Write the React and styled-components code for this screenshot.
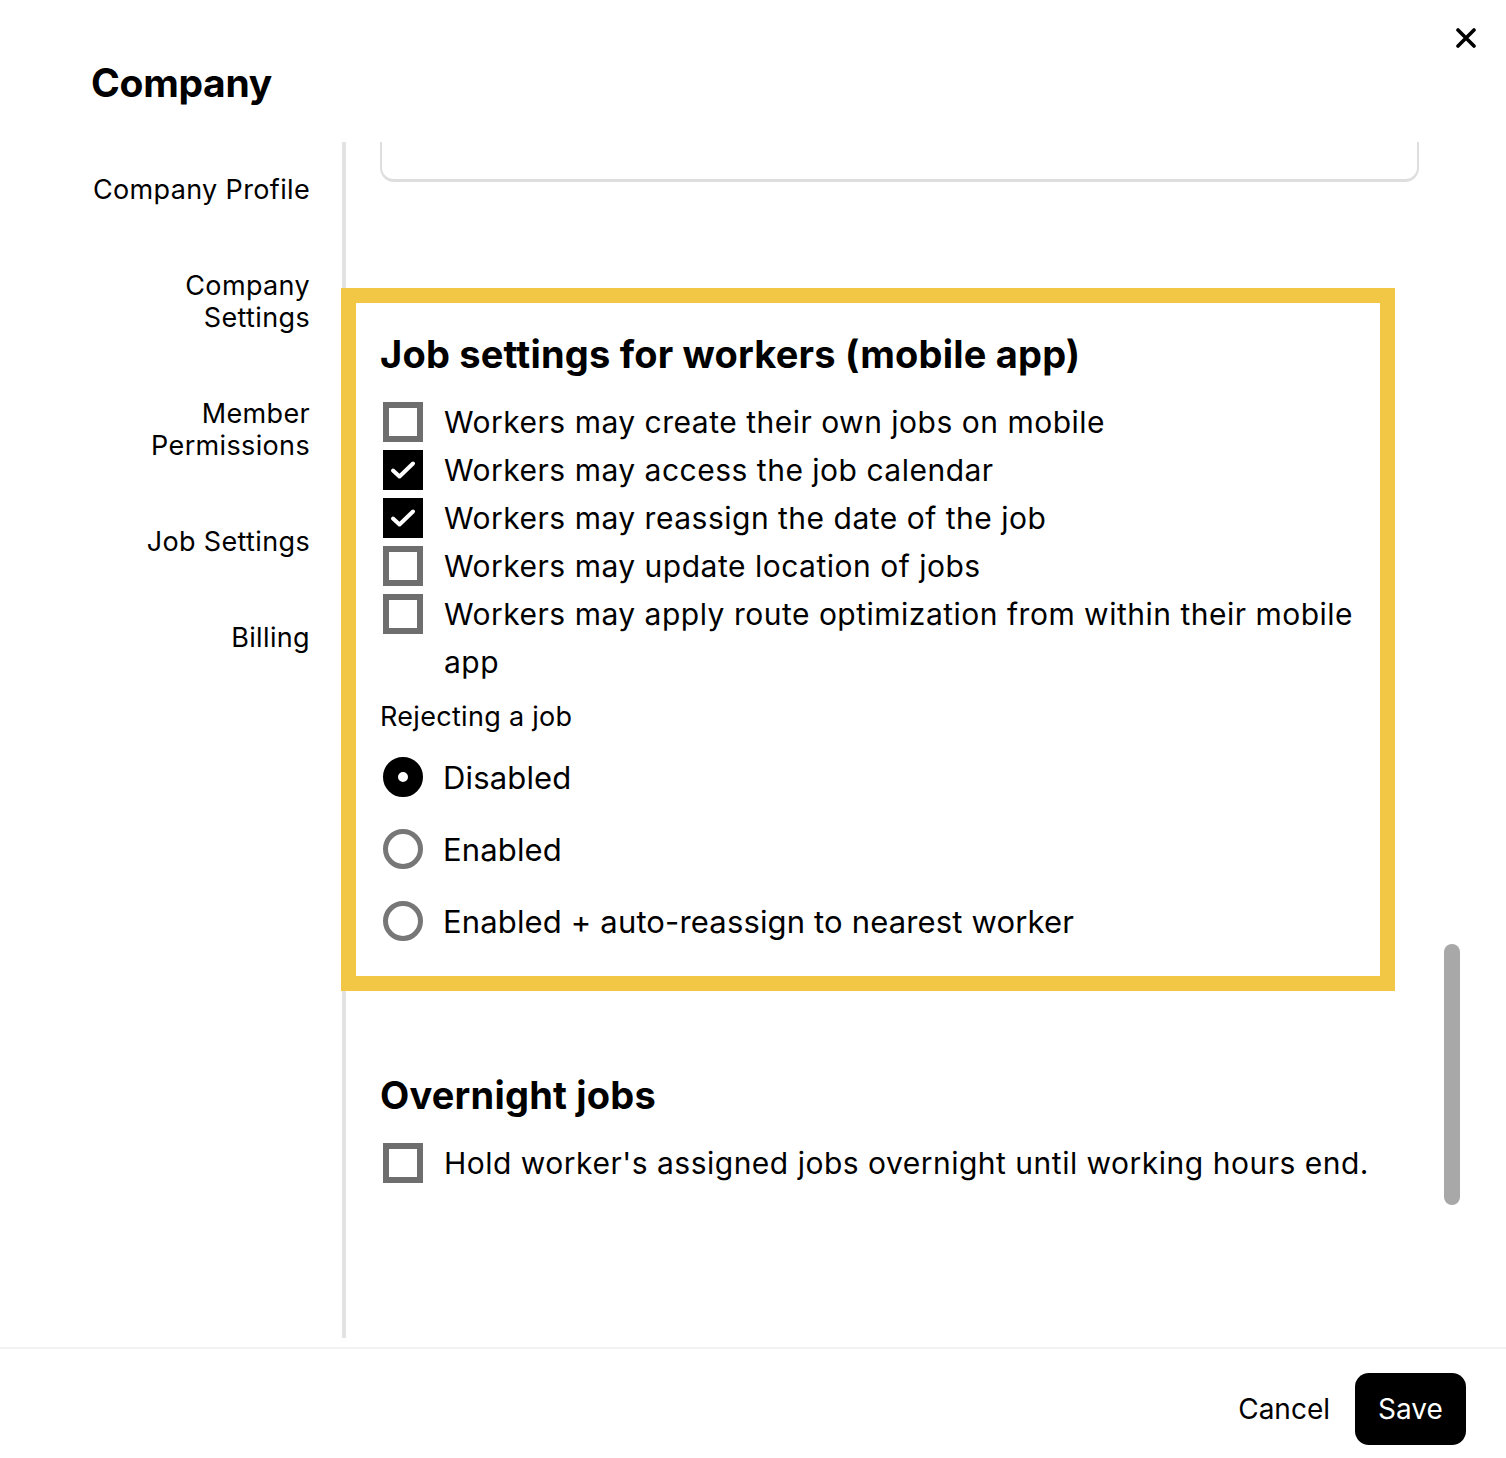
import React from 'react';
import styled, { createGlobalStyle } from 'styled-components';

const GlobalStyle = createGlobalStyle`
    html, body {
        margin: 0;
        padding: 0;
        background: #fff;
    }
    body {
        font-family: "Inter", "Noto Sans", "Liberation Sans", sans-serif;
        color: #000;
    }
    * { box-sizing: border-box; }
`

const Modal = styled.div`
    width: 1506px;
    height: 1458px;
    display: flex;
    flex-direction: column;
    background: #fff;
    overflow: hidden;
`

const Header = styled.header`
    height: 142px;
    display: flex;
    justify-content: space-between;
    align-items: flex-start;
    padding: 0 30px 0 91px;
    flex-shrink: 0;
`

const Title = styled.h1`
    margin: 58px 0 0;
    font-size: 39px;
    line-height: 50px;
    font-weight: 700;
    letter-spacing: -0.3px;
`

const CloseButton = styled.button`
    margin-top: 28px;
    width: 20px;
    height: 20px;
    padding: 0;
    border: none;
    background: none;
    cursor: pointer;
    svg { display: block; }
`

const Body = styled.div`
    height: 1196px;
    display: flex;
    flex-shrink: 0;
`

const Sidebar = styled.nav`
    width: 346px;
    flex-shrink: 0;
    border-right: 4px solid #e2e2e2;
    padding: 32px 32px 0 0;
    display: flex;
    flex-direction: column;
    align-items: flex-end;
    gap: 64px;
`

const NavItem = styled.a`
    font-size: 27px;
    line-height: 32px;
    text-align: right;
    color: #000;
    text-decoration: none;
    letter-spacing: 0.35px;
    cursor: pointer;
`

const Content = styled.div`
    flex: 1;
    position: relative;
    padding: 0 87px 0 34px;
`

const CutCard = styled.div`
    height: 40px;
    border: 2px solid #dedede;
    border-top: none;
    border-bottom-width: 3px;
    border-radius: 0 0 14px 14px;
`

const Highlight = styled.section`
    position: relative;
    z-index: 1;
    margin: 106px 24px 0 -39px;
    border: 15px solid #f3c746;
    background: #fff;
    padding: 29px 18px 31px 24px;
`

const Section = styled.section`
    margin-top: 82px;
`

const Heading = styled.h2`
    margin: 0 0 22px;
    font-size: 38px;
    line-height: 44px;
    font-weight: 700;
    letter-spacing: 0.2px;
`

const CheckRow = styled.label`
    display: flex;
    align-items: flex-start;
    gap: 21px;
    font-size: 30px;
    line-height: 48px;
    letter-spacing: 0.5px;
    cursor: pointer;
`

const Box = styled.span`
    flex-shrink: 0;
    width: 40px;
    height: 40px;
    margin: 4px 0 0 3px;
    border: ${p => (p.$checked ? 'none' : '6px solid #6e6e6e')};
    background: ${p => (p.$checked ? '#000' : '#fff')};
    display: flex;
    align-items: center;
    justify-content: center;
`

const SubLabel = styled.div`
    margin: 15px 0 20px;
    font-size: 27px;
    line-height: 32px;
    letter-spacing: 0.3px;
`

const RadioGroup = styled.div`
    display: flex;
    flex-direction: column;
    gap: 24px;
`

const RadioRow = styled.label`
    display: flex;
    align-items: center;
    gap: 20px;
    height: 48px;
    font-size: 31px;
    letter-spacing: 0.15px;
    cursor: pointer;
`

const Circle = styled.span`
    flex-shrink: 0;
    width: 40px;
    height: 40px;
    margin-left: 3px;
    border-radius: 50%;
    border: ${p => (p.$selected ? '15px solid #000' : '5px solid #777')};
    background: #fff;
`

const Scrollbar = styled.div`
    position: absolute;
    right: 46px;
    top: 802px;
    width: 16px;
    height: 261px;
    border-radius: 8px;
    background: #a8a8a8;
`

const Footer = styled.footer`
    margin-top: 9px;
    flex: 1;
    border-top: 2px solid #f2f2f2;
    display: flex;
    justify-content: flex-end;
    align-items: flex-start;
    gap: 25px;
    padding: 24px 40px 0 0;
`

const TextButton = styled.button`
    height: 72px;
    border: none;
    background: none;
    padding: 0;
    font-family: inherit;
    font-size: 28px;
    color: #000;
    cursor: pointer;
`

const SaveButton = styled.button`
    width: 111px;
    height: 72px;
    border: none;
    border-radius: 14px;
    background: #000;
    color: #fff;
    font-family: inherit;
    font-size: 28px;
    cursor: pointer;
`

const Check = () => (
    <svg width="26" height="20" viewBox="0 0 26 20">
        <path d="M3 10.5 L9.5 16.5 L23 3.5" fill="none" stroke="#fff" strokeWidth="4" strokeLinecap="round" strokeLinejoin="round" />
    </svg>
);

const Checkbox = ({ checked, children }) => (
    <CheckRow>
        <Box $checked={checked}>{checked && <Check />}</Box>
        <span>{children}</span>
    </CheckRow>
);

const Radio = ({ selected, children }) => (
    <RadioRow>
        <Circle $selected={selected} />
        <span>{children}</span>
    </RadioRow>
);

const navItems = [
    ['Company Profile'],
    ['Company', 'Settings'],
    ['Member', 'Permissions'],
    ['Job Settings'],
    ['Billing'],
];

const workerOptions = [
    ['Workers may create their own jobs on mobile', false],
    ['Workers may access the job calendar', true],
    ['Workers may reassign the date of the job', true],
    ['Workers may update location of jobs', false],
    ['Workers may apply route optimization from within their mobile app', false],
];

const App = () => {
    return (
        <>
            <GlobalStyle />
            <Modal>
                <Header>
                    <Title>Company</Title>
                    <CloseButton aria-label="Close">
                        <svg width="20" height="20" viewBox="0 0 20 20">
                            <path d="M2 2 L18 18 M18 2 L2 18" stroke="#000" strokeWidth="3.6" strokeLinecap="round" />
                        </svg>
                    </CloseButton>
                </Header>
                <Body>
                    <Sidebar>
                        {navItems.map(lines => (
                            <NavItem key={lines.join(' ')}>
                                {lines.map((l, i) => (
                                    <React.Fragment key={l}>
                                        {i > 0 && <br />}
                                        {l}
                                    </React.Fragment>
                                ))}
                            </NavItem>
                        ))}
                    </Sidebar>
                    <Content>
                        <CutCard />
                        <Highlight>
                            <Heading>Job settings for workers (mobile app)</Heading>
                            {workerOptions.map(([label, checked]) => (
                                <Checkbox key={label} checked={checked}>{label}</Checkbox>
                            ))}
                            <SubLabel>Rejecting a job</SubLabel>
                            <RadioGroup>
                                <Radio selected>Disabled</Radio>
                                <Radio>Enabled</Radio>
                                <Radio>Enabled + auto-reassign to nearest worker</Radio>
                            </RadioGroup>
                        </Highlight>
                        <Section>
                            <Heading>Overnight jobs</Heading>
                            <Checkbox>Hold worker's assigned jobs overnight until working hours end.</Checkbox>
                        </Section>
                        <Scrollbar />
                    </Content>
                </Body>
                <Footer>
                    <TextButton>Cancel</TextButton>
                    <SaveButton>Save</SaveButton>
                </Footer>
            </Modal>
        </>
    );
};

export default App;
